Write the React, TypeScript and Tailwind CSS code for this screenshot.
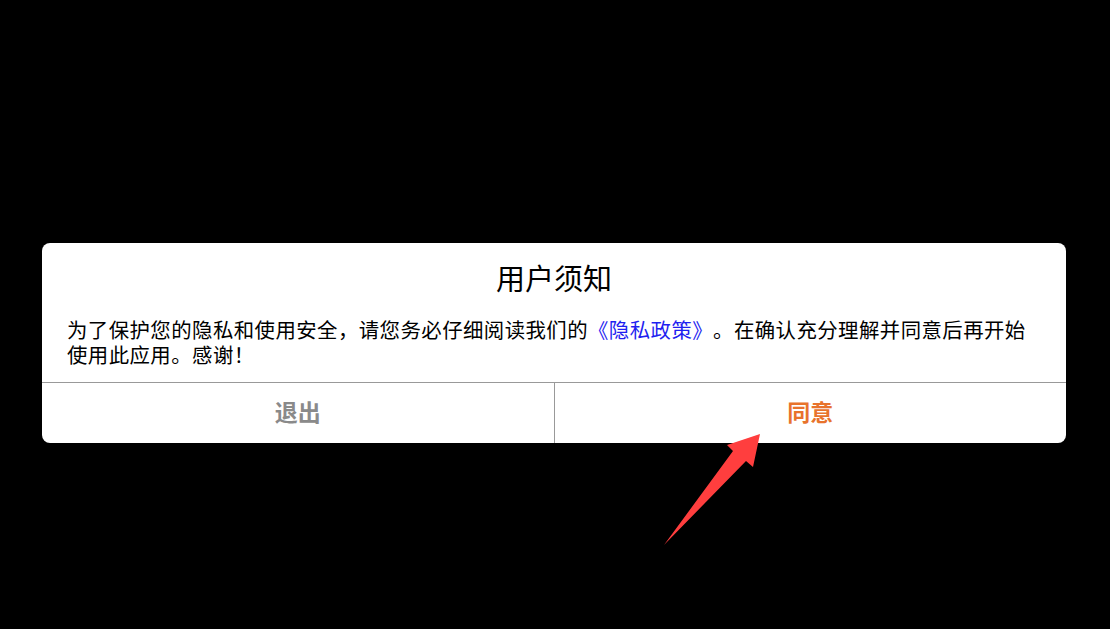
export default function App() {
  return (
    <div
      className="relative w-[1110px] h-[629px] bg-black overflow-hidden"
      style={{ fontFamily: '"Noto Sans CJK SC", "Noto Sans", sans-serif' }}
    >
      <div className="pt-[243px] pl-[42px]">
        <div className="w-[1024px] bg-white rounded-[8px] overflow-hidden">
          <div className="pt-[16px] text-center text-[29px] leading-[37px] text-black">用户须知</div>
          <p className="mt-[21px] px-[25px] pb-[15px] text-[20.4px] leading-[25px] tracking-[0.45px] text-black [text-spacing-trim:space-all]">
            为了保护您的隐私和使用安全，请您务必仔细阅读我们的
            <span className="text-[#1f1ff0]">《隐私政策》</span>
            。在确认充分理解并同意后再开始使用此应用。感谢！
          </p>
          <div className="flex h-[61px] border-t border-[#999999]">
            <button className="flex-1 flex items-center justify-center pb-[4px] text-[23px] font-bold text-[#8a8a8a] border-r border-[#999999]">
              退出
            </button>
            <button className="flex-1 flex items-center justify-center pb-[4px] text-[23px] font-bold text-[#e8732c]">
              同意
            </button>
          </div>
        </div>
      </div>
      <svg className="absolute inset-0 pointer-events-none" width="1110" height="629" viewBox="0 0 1110 629">
        <polygon points="664,545 733,451 727,445 760,434 753,467 746,461" fill="#ff3e3e" />
      </svg>
    </div>
  )
}
